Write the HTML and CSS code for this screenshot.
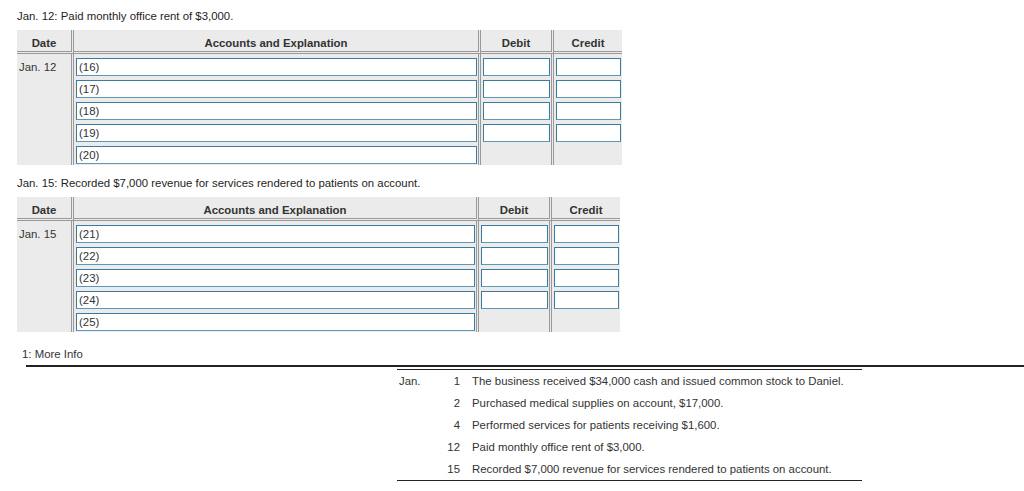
FILE: index.html
```html
<!DOCTYPE html>
<html lang="en">
<head>
<meta charset="utf-8">
<title>Journal entries</title>
<link rel="stylesheet" href="styles.css">
</head>
<body>
<div class="page">
  <section class="entry">
    <p class="prompt">Jan. 12: Paid monthly office rent of $3,000.</p>
    <div class="journal j1">
      <div class="hd">Date</div>
      <div class="hd">Accounts and Explanation</div>
      <div class="hd">Debit</div>
      <div class="hd last">Credit</div>
      <div class="cell date">Jan. 12</div>
      <div class="cell stack">
        <input class="box" type="text" value="(16)">
        <input class="box" type="text" value="(17)">
        <input class="box" type="text" value="(18)">
        <input class="box" type="text" value="(19)">
        <input class="box" type="text" value="(20)">
      </div>
      <div class="cell stack">
        <input class="box" type="text">
        <input class="box" type="text">
        <input class="box" type="text">
        <input class="box" type="text">
      </div>
      <div class="cell stack last">
        <input class="box" type="text">
        <input class="box" type="text">
        <input class="box" type="text">
        <input class="box" type="text">
      </div>
    </div>
  </section>

  <section class="entry">
    <p class="prompt">Jan. 15: Recorded $7,000 revenue for services rendered to patients on account.</p>
    <div class="journal j2">
      <div class="hd">Date</div>
      <div class="hd">Accounts and Explanation</div>
      <div class="hd">Debit</div>
      <div class="hd last">Credit</div>
      <div class="cell date">Jan. 15</div>
      <div class="cell stack">
        <input class="box" type="text" value="(21)">
        <input class="box" type="text" value="(22)">
        <input class="box" type="text" value="(23)">
        <input class="box" type="text" value="(24)">
        <input class="box" type="text" value="(25)">
      </div>
      <div class="cell stack">
        <input class="box" type="text">
        <input class="box" type="text">
        <input class="box" type="text">
        <input class="box" type="text">
      </div>
      <div class="cell stack last">
        <input class="box" type="text">
        <input class="box" type="text">
        <input class="box" type="text">
        <input class="box" type="text">
      </div>
    </div>
  </section>
</div>

<section class="more">
  <div class="more-title">1: More Info</div>
  <div class="more-rule"></div>
  <div class="info">
    <span class="m">Jan.</span><span class="d">1</span><span class="t">The business received $34,000 cash and issued common stock to Daniel.</span>
    <span class="m"></span><span class="d">2</span><span class="t">Purchased medical supplies on account, $17,000.</span>
    <span class="m"></span><span class="d">4</span><span class="t">Performed services for patients receiving $1,600.</span>
    <span class="m"></span><span class="d">12</span><span class="t">Paid monthly office rent of $3,000.</span>
    <span class="m"></span><span class="d">15</span><span class="t">Recorded $7,000 revenue for services rendered to patients on account.</span>
  </div>
</section>
</body>
</html>
```

FILE: styles.css
```css
html, body {
  margin: 0;
  padding: 0;
  background: #fff;
}

body {
  font-family: "Liberation Sans", Arial, Helvetica, sans-serif;
  font-size: 11.4px;
  color: #222;
}

.page {
  padding-left: 17px;
}

.prompt {
  margin: 0;
  padding: 10px 0 7px;
  line-height: 13px;
  color: #1e1e1e;
}

.journal {
  display: grid;
  background: #ebebeb;
  margin-bottom: 2px;
}

.j1 {
  grid-template-columns: 57px 407px 73px 68px;
  width: 605px;
}

.j2 {
  grid-template-columns: 57px 405px 73px 68px;
  width: 603px;
}

.hd {
  box-sizing: border-box;
  height: 24px;
  padding-top: 5px;
  line-height: 16px;
  text-align: center;
  font-weight: bold;
  color: #333;
  border-bottom: 3px double #999;
  border-right: 3px double #999;
}

.cell {
  box-sizing: border-box;
  padding: 4px 1px 1px 2px;
  border-right: 3px double #999;
}

.hd.last,
.cell.last {
  border-right: 0;
}

.date {
  line-height: 18px;
  color: #333;
}

.stack {
  display: flex;
  flex-direction: column;
  gap: 4px;
}

.box {
  box-sizing: border-box;
  display: block;
  width: 100%;
  height: 18px;
  margin: 0;
  padding: 0 2px;
  border: 1px solid #3a7ca0;
  border-bottom-color: #5f97b6;
  background: #fff;
  font-family: "Liberation Sans", Arial, Helvetica, sans-serif;
  font-size: 11.4px;
  color: #333;
  outline: none;
}

.more {
  margin-top: 16px;
}

.more-title {
  padding-left: 22px;
  line-height: 13px;
  color: #333;
}

.more-rule {
  margin: 4px 0 0 26px;
  border-top: 2px solid #222;
}

.info {
  display: grid;
  grid-template-columns: 28px 21px 1fr;
  column-gap: 12px;
  width: 465px;
  box-sizing: border-box;
  margin: 2px 0 0 397px;
  padding-left: 2px;
  border-top: 1px solid #222;
  border-bottom: 1px solid #222;
  line-height: 22px;
  color: #333;
}

.info .d {
  text-align: right;
}
```
